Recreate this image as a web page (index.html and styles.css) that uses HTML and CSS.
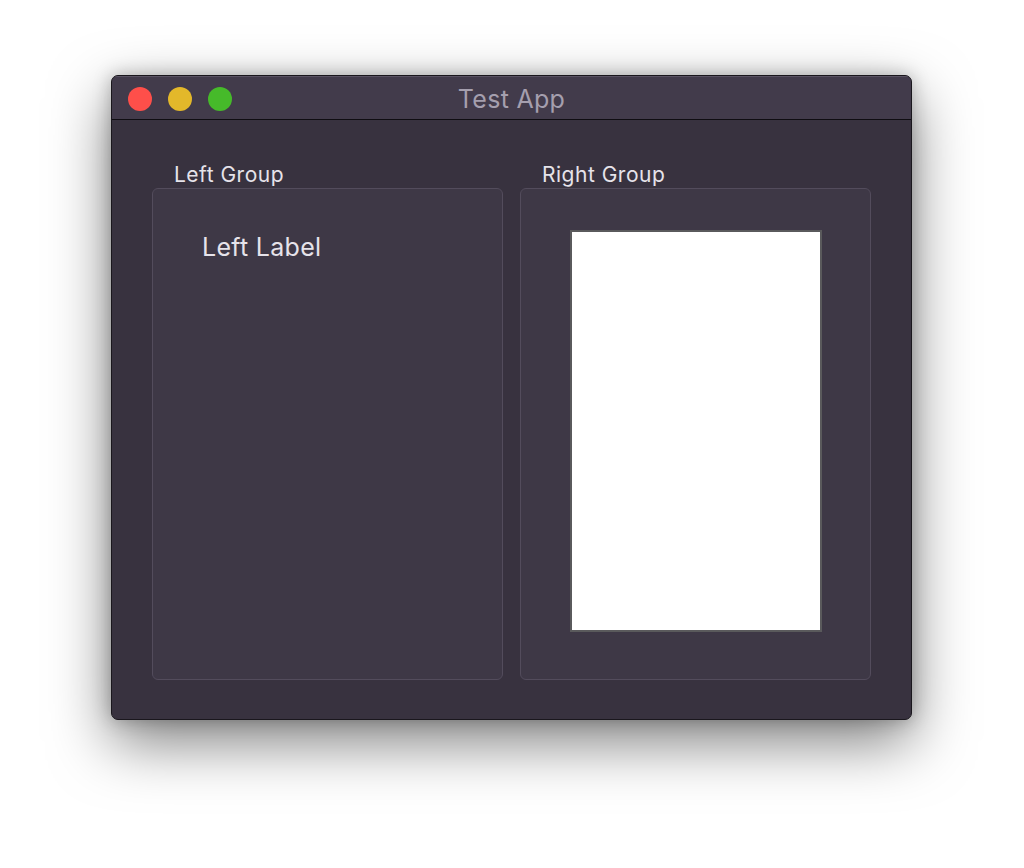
FILE: index.html
```html
<!DOCTYPE html>
<html>
<head>
<meta charset="utf-8">
<link rel="stylesheet" href="styles.css">
</head>
<body>
<div class="window">
  <div class="titlebar">
    <div class="lights">
      <span class="light red"></span>
      <span class="light yellow"></span>
      <span class="light green"></span>
    </div>
    <div class="title">Test App</div>
  </div>
  <div class="content">
    <div class="group">
      <div class="group-label">Left Group</div>
      <div class="group-box left-box">
        <div class="label">Left Label</div>
      </div>
    </div>
    <div class="group">
      <div class="group-label">Right Group</div>
      <div class="group-box right-box">
        <div class="canvas"></div>
      </div>
    </div>
  </div>
</div>
</body>
</html>
```
FILE: styles.css
```css
html, body {
  margin: 0;
  padding: 0;
  background: #ffffff;
  width: 1024px;
  height: 868px;
  overflow: hidden;
}
body {
  padding: 75px 0 0 111px;
  box-sizing: border-box;
  font-family: "Inter", "Liberation Sans", sans-serif;
}
.window {
  width: 801px;
  height: 645px;
  box-sizing: border-box;
  border: 1px solid #1a171d;
  border-radius: 7px;
  background: #38323f;
  box-shadow: 0 22px 60px rgba(0,0,0,0.5), 0 0 18px rgba(0,0,0,0.25);
  overflow: hidden;
  display: flex;
  flex-direction: column;
}
.titlebar {
  position: relative;
  height: 44px;
  flex: none;
  box-sizing: border-box;
  background: #423b4b;
  border-top: 1px solid #5a5363;
  border-bottom: 1px solid #0f0d12;
  display: flex;
  align-items: center;
  justify-content: center;
}
.lights {
  position: absolute;
  left: 16px;
  top: 10px;
  display: flex;
  gap: 16px;
}
.light {
  width: 24px;
  height: 24px;
  border-radius: 50%;
  display: block;
}
.red { background: #fe4f4a; }
.yellow { background: #e3b82a; }
.green { background: #46ba2a; }
.title {
  color: #a59fae;
  font-size: 25px;
  letter-spacing: 0.3px;
  font-weight: 400;
  margin-top: 2px;
}
.content {
  display: flex;
  gap: 17px;
  padding: 42px 40px 0 40px;
}
.group {
  width: 352px;
  display: flex;
  flex-direction: column;
}
.group-label {
  color: #e6e3ea;
  font-size: 21px;
  letter-spacing: 0.5px;
  line-height: 26px;
  padding-left: 22px;
}
.group-box {
  height: 492px;
  box-sizing: border-box;
  background: #3e3846;
  border: 1px solid #534c5c;
  border-radius: 6px;
}
.left-box {
  padding: 42px 0 0 49px;
}
.label {
  color: #e6e3ea;
  font-size: 25px;
  letter-spacing: 0.3px;
  line-height: 32px;
}
.right-box {
  padding: 41px 0 0 49px;
}
.canvas {
  width: 252px;
  height: 402px;
  box-sizing: border-box;
  background: #ffffff;
  border: 2px solid #5a5a5c;
}
```
